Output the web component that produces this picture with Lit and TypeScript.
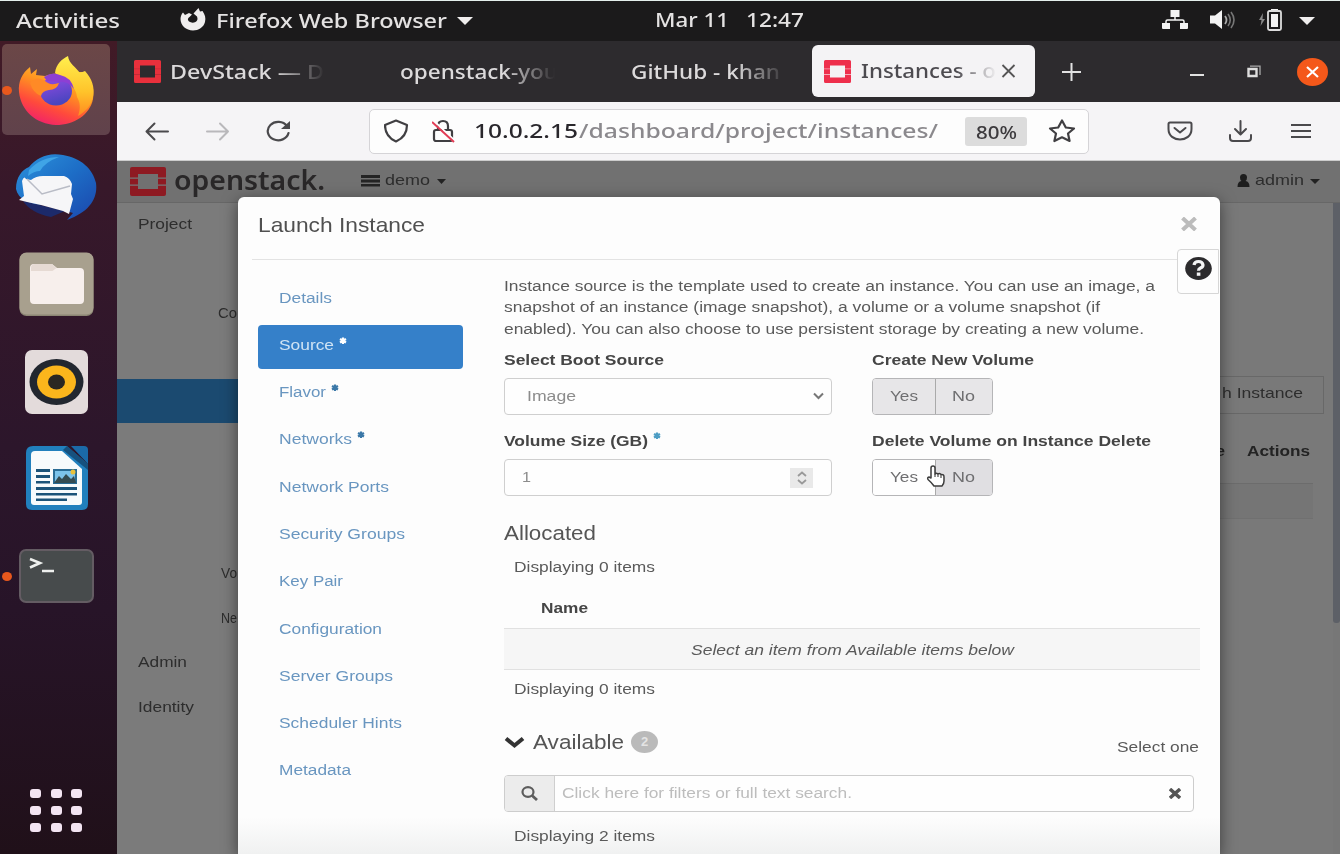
import { LitElement, html, css, nothing } from "lit";
import { customElement, property } from "lit/decorators.js";
import { classMap } from "lit/directives/class-map.js";

/** One line of text set to a fixed advance width. */
@customElement("fit-text")
class FitText extends LitElement {
  @property() text = "";
  @property({ type: Number }) w = 0;

  static styles = css`
    :host { display: inline-block; flex: none; white-space: pre; text-align: left; }
    span { display: inline-block; transform-origin: 0 50%; }
  `;

  updated() {
    const span = this.renderRoot.querySelector("span") as HTMLElement;
    span.style.transform = "none";
    const natural = span.getBoundingClientRect().width;
    this.style.width = `${this.w}px`;
    if (natural) span.style.transform = `scaleX(${this.w / natural})`;
  }

  render() {
    return html`<span>${this.text}</span>`;
  }
}

const t = (text: string, w: number) => html`<fit-text .text=${text} .w=${w}></fit-text>`;

const openstackMark = (bg: string, fg: string) => html`
  <svg class="mark" viewBox="0 0 36 29" preserveAspectRatio="none">
    <path fill="${fg}" fill-rule="evenodd" d="M2 0h32a2 2 0 0 1 2 2v25a2 2 0 0 1-2 2H2a2 2 0 0 1-2-2V2a2 2 0 0 1 2-2zM8 7v15h20V7z"/>
    <path fill="${bg}" d="M0 10.600h8v1.200H0zM28 10.600h8v1.200h-8zM0 17.600h8v1.200H0zM28 17.600h8v1.200h-8z"/>
  </svg>`;

@customElement("top-bar")
class TopBar extends LitElement {
  static styles = css`
    :host { display: grid; grid-template-columns: 16px 164px 36px 240px 199px 91px 416px 48px 49px 38px 1fr;
      align-items: center; height: 41px; box-sizing: border-box; border-top: 1px solid #e4efec; background: #1b1a1b; color: #e4e2e2;
      font: 500 19.500px/34px "Noto Sans", sans-serif; }
    svg { display: block; }
    .up { padding-bottom: 2px; }
  `;
  render() {
    return html`
      <i></i>
      <div>${t("Activities", 104)}</div>
      <svg class="up" width="26" height="24" viewBox="0 0 26 24"><path fill="#f0eeee" d="M.5 11C.5 8.500 1.500 6 3 4.500l2 2.500 4-2 3 1.500-2.500 2.500Q6.500 11 9 13.500q3 2 6.500.5 3-2 1.500-5.500L13.500 5.500 18.500 0l1.500 3.500 2.500-.5C25 6.500 26 10 25 14c-1.500 5.500-6.500 8.500-12 8.500C6 22.500.5 17.500.5 11z"/></svg>
      <div>${t("Firefox Web Browser", 231)}</div>
      <svg width="18" height="10" viewBox="0 0 18 10"><path fill="#f0eeee" d="M1 1h16L9 9z"/></svg>
      <div class="up">${t("Mar 11", 74)}</div>
      <div class="up">${t("12:47", 58)}</div>
      <svg class="up" width="26" height="22" viewBox="0 0 26 22"><path fill="#f3f3f3" d="M8.500 1h9v7h-9zM0 14h8v6H1q-1 0-1-1zM18 14h8v5q0 1-1 1h-7z"/><path fill="none" stroke="#f3f3f3" stroke-width="1.500" d="M13 8v3M4 14v-1.500q0-1.500 1.500-1.500h15q1.500 0 1.500 1.500V14"/></svg>
      <svg class="up" width="26" height="22" viewBox="0 0 26 22"><path fill="#f3f3f3" d="M0 6.500h5L12 1v19l-7-5.500H0z"/><path fill="none" stroke="#aaa" stroke-width="1.800" d="M15 7q3 4 0 8"/><path fill="none" stroke="#777" stroke-width="1.600" d="M18 5q4.500 6 0 12M21 3q6 8 0 16"/></svg>
      <svg class="up" width="26" height="24" viewBox="0 0 26 24"><path fill="#888" d="M4 5 0 12h2.500l-1 6L6 11H3.500z"/><path fill="#f3f3f3" d="M12 1h7v3h-7z"/><rect x="9" y="3" width="13" height="19" rx="1.500" fill="none" stroke="#ddd" stroke-width="1.800"/><path fill="#f3f3f3" d="M12 6h7v13h-7z"/></svg>
      <svg width="18" height="10" viewBox="0 0 18 10"><path fill="#f0eeee" d="M2 1h16l-8 8z"/></svg>
    `;
  }
}

const firefoxIcon = html`<svg width="78" height="70" viewBox="0 0 78 70">
  <defs>
    <linearGradient id="fa" x1=".8" y1="0" x2=".3" y2="1"><stop offset="0" stop-color="#ffd23a"/><stop offset=".4" stop-color="#ff9420"/><stop offset=".72" stop-color="#ff4a3c"/><stop offset="1" stop-color="#f0206c"/></linearGradient>
    <linearGradient id="fb" x1="0" y1="0" x2=".3" y2="1"><stop offset="0" stop-color="#9a4be6"/><stop offset="1" stop-color="#4a45c0"/></linearGradient>
    <linearGradient id="fc" x1="0" y1="0" x2="0" y2="1"><stop offset="0" stop-color="#fff04e"/><stop offset=".6" stop-color="#ffc32a"/><stop offset="1" stop-color="#ff8a20"/></linearGradient>
  </defs>
  <path fill="url(#fa)" d="M2 37C1 27 5 18 13 12l1 7 6-5-1 6 9 1 7-2 20-2 12 0c7 7 11 16 9 27-3 16-19 26-37 26C19 69 4 56 2 37z"/>
  <path fill="url(#fc)" d="M38 18C39 9 45 4 51 1c1 8 8 11 12 17l5-2c7 8 10 16 8 26-2 9-8 15-15 19 3-8 2-14-1-19-1-12-12-16-22-24z"/>
  <ellipse cx="39" cy="36" rx="16" ry="14.500" fill="url(#fb)"/>
  <path fill="#8d3fd3" d="M27 22q8-6 16-2 11 2 14 14-7-9-15-7l-12-1z"/>
  <path fill="#ff8a26" d="M13 28q7-8 15-2 5 5 14 2-2 7-10 7-7 1-8 6-8-3-11-13z"/>
</svg>`;

const thunderbirdIcon = html`<svg width="82" height="68" viewBox="0 0 82 68">
  <defs><linearGradient id="ta" x1="0" y1="0" x2="1" y2="1"><stop offset="0" stop-color="#2c93dc"/><stop offset=".5" stop-color="#1d6dc6"/><stop offset="1" stop-color="#1b46ac"/></linearGradient></defs>
  <path fill="#1c2a6a" d="M8 48q8 12 28 16l14-6z"/>
  <path fill="url(#ta)" d="M1 36C1 24 7 17 14 14 22 4 34-1 48 2c18 3 30 14 33 28 2 15-6 29-29 37l6-7-26-8C14 52 3 46 1 36z"/>
  <path fill="#3fa4e6" d="M14 17Q26 4 44 4 30 9 25 18q-6 0-12 5z"/>
  <path fill="#f6f6f8" d="M7 28q2-6 4-2l5 1q5-4 12-4h21q6 2 8 8l-1 10 2 5-4 15-6-3-22-6-14-3-8-2 5-4z"/>
  <path fill="none" stroke="#b9bcc6" stroke-width="1.500" d="m12 26 15 15 28-8"/>
</svg>`;

const filesIcon = html`<svg width="75" height="64" viewBox="0 0 75 64">
  <rect x=".5" y="1" width="74" height="63" rx="7" fill="#8c8674"/><rect x=".5" y=".5" width="74" height="62" rx="7" fill="#a8a08e"/>
  <path fill="#f7efec" d="M11 16q0-4 4-4h18l5 4h23q4 0 4 4v28q0 4-4 4H15q-4 0-4-4z"/><path fill="#e6dad3" d="M12 16q0-4 4-4h17l4.500 4-4 3H12z"/>
</svg>`;

const rhythmIcon = html`<svg width="63" height="64" viewBox="0 0 63 64">
  <rect width="63" height="64" rx="7" fill="#e3dbdb"/><ellipse cx="31.500" cy="32" rx="27" ry="23" fill="#22272f"/>
  <ellipse cx="31.500" cy="32" rx="19.500" ry="16.500" fill="#fbb61c"/><ellipse cx="31.500" cy="32" rx="8.500" ry="7.500" fill="#2a2722"/>
</svg>`;

const writerIcon = html`<svg width="63" height="65" viewBox="0 0 63 65">
  <path fill="#2180bd" d="M8 0h34l21 18v40q0 6-6 6H7q-6 0-6-6V7q0-7 7-7z"/>
  <path fill="#1b6aa8" d="M46 0h13q4 0 4 4v14z"/><path fill="#11385c" d="m42 0 21 18v6L38 4z" opacity=".65"/>
  <path fill="#f7fbfc" d="M10 5h27l20 18v33q0 3-3 3H9q-3 0-3-3V9q0-4 4-4z"/>
  <path fill="#1c5479" d="M11 23h14v3H11zM11 29h14v3H11zM11 35h14v2.500H11zM11 41h41v3H11zM11 47h41v2.500H11zM11 52.500h31V55H11z"/>
  <path fill="#2a6c94" d="M28 23h24v15H28z"/><path fill="#7cc3ea" d="M30 25h20v11H30z"/><path fill="#344c52" d="m29 37 5-7 3 3 4-5 5 5 3-3 2 7z"/><circle cx="48" cy="26" r="2.500" fill="#e9c13a"/>
</svg>`;

const terminalIcon = html`<svg width="75" height="54" viewBox="0 0 75 54">
  <rect x="1" y="1" width="73" height="52" rx="6" fill="#474b4c" stroke="#645c63" stroke-width="2"/>
  <path fill="none" stroke="#eef0ee" stroke-width="2.600" d="m11 10 10 4-10 4.500M23 22h12"/>
</svg>`;

@customElement("app-dock")
class AppDock extends LitElement {
  static styles = css`
    :host { display: flex; flex-direction: column; width: 117px; background: linear-gradient(#411a26 0, #37182a 18%, #2c162b 50%, #271428 70%, #201019 100%); }
    .slot { position: relative; display: grid; place-items: center; height: 97.300px; width: 112px; flex: none; }
    .on { position: absolute; left: 2px; top: 45px; width: 10px; height: 9px; border-radius: 50%; background: #e9581d; }
    .tile { display: grid; place-items: center; width: 108px; height: 91px; border-radius: 5px; background: linear-gradient(#6b4747, #60424b); }
    .apps { margin: auto 0 22px 30px; display: grid; grid-template-columns: repeat(3, 11px); gap: 7.500px 9.500px; }
    .apps i { height: 9.500px; border-radius: 3px; background: #f3e4f2; }
    svg { display: block; }
  `;
  render() {
    return html`
      <div class="slot"><div class="tile">${firefoxIcon}</div><i class="on"></i></div>
      ${[thunderbirdIcon, filesIcon, rhythmIcon, writerIcon].map((i) => html`<div class="slot">${i}</div>`)}
      <div class="slot">${terminalIcon}<i class="on"></i></div>
      <div class="apps">${Array.from({ length: 9 }, () => html`<i></i>`)}</div>
    `;
  }
}

@customElement("browser-chrome")
class BrowserChrome extends LitElement {
  static styles = css`
    :host { display: block; font: 500 20px/30px "Noto Sans", sans-serif; }
    svg { display: block; }
    .tabs { display: grid; grid-template-columns: 17px 36px 230px 231px 181px 223px 27px 128px 57px 50px 1fr; height: 61px; align-items: center; background: #2d2b2e; color: #dcdadb; }
    .tabs .mark { width: 27px; height: 23px; }
    .label { white-space: nowrap; height: 32px; width: 160px; padding-top: 2px; -webkit-mask-image: linear-gradient(90deg, #000 65%, transparent 97%); }
    .active { display: grid; grid-template-columns: 12px 37px 140px 1fr; align-items: center; height: 52px; border-radius: 6px; background: #f4f3f5; color: #4d4b50; margin-bottom: 1px; }
    .active .label { width: 136px; -webkit-mask-image: linear-gradient(90deg, #000 70%, transparent 100%); }
    .close { display: grid; place-items: center; width: 31px; height: 28px; border-radius: 50%; background: #f4581a; }
    .bar { display: grid; grid-template-columns: 28px 60px 61px 103px 720px 78px 62px 62px 1fr; align-items: center; height: 59px; box-sizing: border-box; border-bottom: 1px solid #ccc; background: #f5f4f6; }
    .url { display: grid; grid-template-columns: 14px 48px 42px 105px 386px 63px 20px 1fr; align-items: center; height: 45px; box-sizing: border-box; border: 1.500px solid #d5d4d7; border-radius: 5px; background: #fdfdfd; }
    .host { color: #29272c; }
    .path { color: #8b898d; }
    .zoom { display: grid; place-items: center; height: 29px; border-radius: 3px; background: #dcdcdc; color: #3c3a3d; font-size: 17.500px; margin-right: 1px; }
  `;
  render() {
    return html`
      <div class="tabs">
        <i></i>${openstackMark("#c22b36", "#e8303c")}
        <div class="label">${t("DevStack — D", 154)}</div>
        <div class="label">${t("openstack-you", 158)}</div>
        <div class="label">${t("GitHub - khan", 149)}</div>
        <div class="active"><i></i>${openstackMark("#f7a9b6", "#ee2f4c")}
          <div class="label">${t("Instances - o", 135)}</div>
          <svg width="16" height="14" viewBox="0 0 16 14"><path stroke="#555" stroke-width="1.800" d="m1.500 1 12 12m0-12-12 12"/></svg>
        </div>
        <i></i>
        <svg width="20" height="20" viewBox="0 0 20 20"><path stroke="#e2e2e2" stroke-width="2" d="M9.500 1v18M0 10h19"/></svg>
        <svg width="14" height="12" viewBox="0 0 14 12"><path stroke="#e2e2e2" stroke-width="2" d="M0 9h14"/></svg>
        <svg width="16" height="14" viewBox="0 0 16 14"><path fill="none" stroke="#dedede" stroke-width="2.400" d="M1.500 4h8v7h-8z"/><path fill="none" stroke="#aaa" stroke-width="1.300" d="M3 1.200h10V10"/></svg>
        <div class="close"><svg width="13" height="12" viewBox="0 0 13 12"><path stroke="#fff" stroke-width="2.200" d="m1 1 11 10m0-10L1 11"/></svg></div>
      </div>
      <div class="bar">
        <i></i>
        <svg width="26" height="20" viewBox="0 0 26 20"><path fill="none" stroke="#4a494c" stroke-width="2" stroke-linecap="round" stroke-linejoin="round" d="M23 10.500H1.500m8-8-8 8 8 8"/></svg>
        <svg width="26" height="20" viewBox="0 0 26 20"><path fill="none" stroke="#b9b8bb" stroke-width="2" stroke-linecap="round" stroke-linejoin="round" d="M2 10.500h21m-8-8 8 8-8 8"/></svg>
        <svg width="26" height="22" viewBox="0 0 26 22"><path fill="none" stroke="#4a494c" stroke-width="2.200" stroke-linecap="round" d="M21 6A10.500 9.200 0 1 0 22.500 13"/><path fill="#4a494c" d="M24 1v8h-9z"/></svg>
        <div class="url">
          <i></i>
          <svg width="26" height="24" viewBox="0 0 26 24"><path fill="none" stroke="#403f42" stroke-width="2.200" stroke-linejoin="round" d="m12 1.500 11 4.500c0 8-3 13-11 16.500C4 19 1 14 1 6z"/></svg>
          <svg width="24" height="24" viewBox="0 0 24 24"><path fill="none" stroke="#403f42" stroke-width="2.200" d="M6 11V7q0-5 5-5t5 5v4"/><rect x="2" y="11" width="18" height="11" rx="2" fill="none" stroke="#403f42" stroke-width="2.200"/><path stroke="#fff" stroke-width="2" d="m2 2 20 19"/><path stroke="#e23c55" stroke-width="2" d="m0 3 22 20"/></svg>
          <div class="host">${t("10.0.2.15", 104)}</div>
          <div class="path">${t("/dashboard/project/instances/", 359)}</div>
          <div class="zoom">${t("80%", 41)}</div>
          <i></i>
          <svg width="28" height="24" viewBox="0 0 28 24"><path fill="none" stroke="#403f42" stroke-width="2.200" stroke-linejoin="round" d="m14 1.500 3.800 7 8.200 1-6 5 1.600 7.500L14 18.300 6.400 22 8 14.500l-6-5 8.200-1z"/></svg>
        </div>
        <i></i>
        <svg width="26" height="20" viewBox="0 0 26 20"><path fill="none" stroke="#4a494c" stroke-width="2" stroke-linecap="round" stroke-linejoin="round" d="M3 1.500h20q1.500 0 1.500 1.500v5c0 14-23 14-23 0V3q0-1.500 1.500-1.500zM7.500 7l5.500 4.500L18.500 7"/></svg>
        <svg width="24" height="22" viewBox="0 0 24 22"><path fill="none" stroke="#4a494c" stroke-width="2" stroke-linecap="round" stroke-linejoin="round" d="M11.500 1v13M6 9l5.500 5.500L17 9M1 15v3q0 3 3 3h15q3 0 3-3v-3"/></svg>
        <svg width="22" height="16" viewBox="0 0 22 16"><path stroke="#4a494c" stroke-width="1.800" d="M0 2h20M0 8h20M0 14h20"/></svg>
      </div>
    `;
  }
}

@customElement("dashboard-page")
class DashboardPage extends LitElement {
  static styles = css`
    :host { display: grid; grid-template-rows: 42px 1fr; height: 100%; background: #7a7a7a; color: #2d2d2d; font: 15px/20px "Liberation Sans", Arial, sans-serif; overflow: hidden; }
    svg { display: block; }
    nav { display: grid; grid-template-columns: 13px 44px 187px 24px 52px 800px 18px 55px 1fr; align-items: center; background: #717171; border-bottom: 1px solid #676767; }
    nav .mark { width: 36px; height: 29px; }
    nav > div { padding-bottom: 3px; }
    .word { font: 600 27.500px/34px "Noto Sans", sans-serif; color: #292728; }
    .main { display: grid; grid-template-columns: 122px 974px 1fr 7px; }
    .side { display: flex; flex-direction: column; background: #7b7b7b; overflow: hidden; }
    .row { height: 44.500px; padding: 11px 0 0 21px; box-sizing: border-box; flex: none; }
    .sub { text-align: right; padding-right: 2px; padding-left: 0; }
    .gap { height: 44px; flex: none; }
    .blue { height: 44px; margin: 43px 0 129px; background: #1b4a70; flex: none; }
    .right { grid-column: 3; display: flex; flex-direction: column; background: #797979; }
    .btnrow { height: 38px; margin: 173px 9px 0 0; border: 1px solid #686868; border-left: 0; box-sizing: border-box; padding: 6px 0 0 9px; }
    .head { display: flex; height: 70px; box-sizing: border-box; padding: 27px 0 0 3px; gap: 22px; font-weight: bold; color: #232323; border-bottom: 1px solid #6c6c6c; margin-right: 20px; }
    .cell { height: 34px; margin-right: 20px; border-bottom: 1px solid #707070; background: #757575; }
    .scroll { background: #777; }
    .scroll i { display: block; height: 420px; background: #5d6067; border-radius: 0 0 3px 3px; }
  `;
  render() {
    return html`
      <nav>
        <i></i>${openstackMark("#777", "#8e1a22")}
        <div class="word">${t("openstack.", 151)}</div>
        <svg width="19" height="14" viewBox="0 0 19 14"><path fill="#242424" d="M0 0h19v3H0zM0 4.500h19v3H0zM0 9h19v2.500H0z"/></svg>
        <div>${t("demo", 45)}</div>
        <svg width="9" height="6" viewBox="0 0 9 6"><path fill="#222" d="M0 0h9L4.500 5z"/></svg>
        <svg width="13" height="15" viewBox="0 0 13 15"><path fill="#1d1d1d" d="M6.500 0q3.500 0 3.500 3.500Q10 6 8.500 7q4 .5 4 6H.5q0-5.500 4-6Q3 6 3 3.500 3 0 6.500 0z"/></svg>
        <div>${t("admin", 49)}</div>
        <svg width="10" height="6" viewBox="0 0 10 6"><path fill="#222" d="M0 0h10L5 5z"/></svg>
      </nav>
      <div class="main">
        <div class="side">
          <div class="row">${t("Project", 54)}</div>
          <div class="gap"></div>
          <div class="row sub">${t("Co", 19)}</div>
          <div class="blue"></div>
          <div class="row sub">${t("Vo", 16)}</div>
          <div class="row sub">${t("Ne", 16)}</div>
          <div class="row">${t("Admin", 49)}</div>
          <div class="row">${t("Identity", 56)}</div>
        </div>
        <div class="right">
          <div class="btnrow">${t("h Instance", 81)}</div>
          <div class="head">${t("e", 9)}${t("Actions", 63)}</div>
          <div class="cell"></div>
        </div>
        <div class="scroll"><i></i></div>
      </div>
    `;
  }
}

interface Step { label: string; w: number; required?: boolean; active?: boolean; }

const STEPS: Step[] = [
  { label: "Details", w: 53 },
  { label: "Source", w: 55, required: true, active: true },
  { label: "Flavor", w: 47, required: true },
  { label: "Networks", w: 73, required: true },
  { label: "Network Ports", w: 110 },
  { label: "Security Groups", w: 126 },
  { label: "Key Pair", w: 64 },
  { label: "Configuration", w: 103 },
  { label: "Server Groups", w: 114 },
  { label: "Scheduler Hints", w: 123 },
  { label: "Metadata", w: 72 },
];

const asterisk = html`<svg class="req" width="8" height="8" viewBox="0 0 8 8"><path stroke="currentColor" stroke-width="2.200" d="M4 .5v6.500M1 2l6 3.500M7 2 1 5.500"/></svg>`;

@customElement("launch-dialog")
class LaunchDialog extends LitElement {
  static styles = css`
    :host { display: block; box-sizing: border-box; width: 982px; height: 657px; overflow: hidden; border-radius: 6px 6px 0 0; background: linear-gradient(#fdfdfd 620px, #f0f1f1 657px); color: #5a5a5a; font: 15.400px/21.400px "Liberation Sans", Arial, sans-serif; }
    svg { display: block; }
    header { display: flex; justify-content: space-between; align-items: center; height: 63px; box-sizing: border-box; margin: 0 40px 0 14px; padding: 0 0 6px 6px; border-bottom: 1px solid #e3e3e3; }
    .title { font-size: 21px; line-height: 26px; color: #505050; }
    .x { margin: 0 -17px 2px 0; }
    .help { position: absolute; left: 939px; top: 52px; width: 42px; height: 45px; box-sizing: border-box; display: grid; place-items: center; padding-bottom: 6px; border: 1px solid #d6d6d6; border-radius: 4px 0 0 4px; background: #fdfdfd; }
    .body { display: grid; grid-template-columns: 205px 1fr; column-gap: 41px; padding-left: 20px; }
    .steps { display: flex; flex-direction: column; gap: 3.300px; padding-top: 18px; }
    .step { display: flex; gap: 5px; height: 44px; box-sizing: border-box; padding: 8.500px 0 0 21px; border-radius: 4px; color: #6996c0; }
    .step .req { color: #3b78a8; margin-top: 3px; }
    .step.on { background: #3580c9; color: #cfe3f4; }
    .step.on .req { color: #fff; }
    .intro { display: flex; flex-direction: column; padding-top: 15px; }
    .form { display: grid; grid-template-columns: 328px 1fr; column-gap: 40px; row-gap: 5px; }
    .label { display: flex; gap: 5px; height: 39px; box-sizing: border-box; padding-top: 10px; font-weight: bold; color: #454545; }
    .label .req { color: #4d9dc4; margin-top: 2px; }
    .group { height: 76px; }
    .field { display: flex; align-items: center; justify-content: space-between; height: 37px; box-sizing: border-box; border: 1.500px solid #cfcfcf; border-radius: 4px; background: #fefefe; color: #8c8c8c; padding: 0 7px 2px 22px; }
    .num { padding: 0 18px 2px 17px; }
    .spin { display: grid; place-items: center; width: 23px; height: 20px; background: #e9e9e9; margin-top: 2px; }
    .toggle { display: grid; grid-template-columns: 62px 59px; width: 121px; height: 37px; box-sizing: border-box; border: 1.500px solid #b5b5b7; border-radius: 4px; overflow: hidden; color: #6e6e70; }
    .toggle > div { display: grid; place-items: center; padding-bottom: 3px; background: #e7e6e8; }
    .toggle > div.off { background: #fefefe; }
    .toggle > div + div { border-left: 1px solid #aaa; padding-right: 3px; }
    .toggle .pressed { background: #e0dfe2; }
    h4 { margin: 0; font-weight: normal; font-size: 20.500px; line-height: 26px; color: #555; }
    .alloc { padding-top: 24px; height: 48px; box-sizing: border-box; }
    .line { padding-left: 10px; height: 43px; box-sizing: border-box; padding-top: 12px; }
    .th { font-weight: bold; color: #454545; padding: 10px 0 0 37px; height: 41px; box-sizing: border-box; }
    .empty { display: grid; place-items: center; width: 696px; height: 42px; box-sizing: border-box; border: solid #e1e1e1; border-width: 1.500px 0; background: #f6f6f6; font-style: italic; }
    .after { padding-top: 8px; height: 49px; }
    .avail { display: flex; align-items: center; width: 695px; height: 46px; box-sizing: border-box; }
    .avail h4 { margin: 0 7px 0 8px; }
    .badge { width: 27px; height: 22px; border-radius: 50%; background: #bababa; color: #e4e4e4; font: bold 13px/22px "Liberation Sans", sans-serif; text-align: center; }
    .one { margin: 9px 0 0 auto; }
    .search { display: grid; grid-template-columns: 50px 1fr 24px; align-items: center; width: 690px; height: 37px; margin-top: 10px; box-sizing: border-box; border: 1.500px solid #cdcdcd; border-radius: 4px; background: #fefefe; color: #bdbdbd; overflow: hidden; }
    .search .mag { display: grid; place-items: center; align-self: stretch; background: #ececec; border-right: 1px solid #cfcfcf; }
    .search .ph { padding: 0 0 2px 7px; }
    .last { padding-top: 13px; }
    .cursor { position: absolute; left: 688px; top: 268px; }
  `;

  private toggle(firstOff: boolean) {
    return html`<div class="toggle">
      <div class=${classMap({ off: firstOff })}>${t("Yes", 28)}</div>
      <div class=${classMap({ pressed: firstOff })}>${t("No", 23)}</div>
    </div>`;
  }

  render() {
    return html`
      <header>
        <div class="title">${t("Launch Instance", 167)}</div>
        <svg class="x" width="16" height="14" viewBox="0 0 16 14"><path stroke="#bcbcbc" stroke-width="4" d="m1.500 1 13 12m0-12-13 12"/></svg>
      </header>
      <div class="help">
        <svg width="27" height="23" viewBox="0 0 27 23"><ellipse cx="13.500" cy="11.500" rx="13.300" ry="11.400" fill="#2c2b2d"/><path fill="none" stroke="#f4f4f4" stroke-width="3.200" d="M9 8q.5-3.500 4.500-3.500T18 8q0 2-2.500 3-2 1-2 2.700"/><path fill="#f4f4f4" d="M11.800 15.500h3.600v3.300h-3.600z"/></svg>
      </div>
      <div class="body">
        <div class="steps">
          ${STEPS.map((s) => html`<div class=${classMap({ step: true, on: !!s.active })}>${t(s.label, s.w)}${s.required ? asterisk : nothing}</div>`)}
        </div>
        <div>
          <div class="intro">
            ${t("Instance source is the template used to create an instance. You can use an image, a", 651)}
            ${t("snapshot of an instance (image snapshot), a volume or a volume snapshot (if", 596)}
            ${t("enabled). You can also choose to use persistent storage by creating a new volume.", 640)}
          </div>
          <div class="form">
            <div class="group">
              <div class="label">${t("Select Boot Source", 160)}</div>
              <div class="field">${t("Image", 49)}<svg width="11" height="8" viewBox="0 0 11 8"><path fill="none" stroke="#777" stroke-width="2" d="m1 1.500 4.500 4.500L10 1.500"/></svg></div>
            </div>
            <div class="group"><div class="label">${t("Create New Volume", 162)}</div>${this.toggle(false)}</div>
            <div class="group">
              <div class="label">${t("Volume Size (GB)", 144)}${asterisk}</div>
              <div class="field num">${t("1", 9)}<div class="spin"><svg width="12" height="14" viewBox="0 0 12 14"><path fill="none" stroke="#999" stroke-width="1.800" d="m2 5 4-3.500L10 5M2 9l4 3.500L10 9"/></svg></div></div>
            </div>
            <div class="group"><div class="label">${t("Delete Volume on Instance Delete", 279)}</div>${this.toggle(true)}</div>
          </div>
          <h4 class="alloc">${t("Allocated", 92)}</h4>
          <div class="line">${t("Displaying 0 items", 141)}</div>
          <div class="th">${t("Name", 47)}</div>
          <div class="empty">${t("Select an item from Available items below", 323)}</div>
          <div class="line after">${t("Displaying 0 items", 141)}</div>
          <div class="avail">
            <svg width="21" height="13" viewBox="0 0 21 13"><path fill="none" stroke="#333" stroke-width="4" d="m2 2.500 8.500 7 8.500-7"/></svg>
            <h4>${t("Available", 91)}</h4><div class="badge">2</div>
            <div class="one">${t("Select one", 82)}</div>
          </div>
          <div class="search">
            <div class="mag"><svg width="17" height="15" viewBox="0 0 17 15"><ellipse cx="7" cy="6" rx="5.500" ry="4.800" fill="none" stroke="#5d5d5d" stroke-width="2.200"/><path stroke="#5d5d5d" stroke-width="2.800" d="m11 9.500 5 4.500"/></svg></div>
            <div class="ph">${t("Click here for filters or full text search.", 290)}</div>
            <svg width="12" height="11" viewBox="0 0 12 11"><path stroke="#555" stroke-width="3.400" d="m1 1 10 9m0-9L1 10"/></svg>
          </div>
          <div class="line last">${t("Displaying 2 items", 141)}</div>
        </div>
      </div>
      <svg class="cursor" width="20" height="23" viewBox="0 0 20 23"><path fill="#fff" stroke="#3d3d3d" stroke-width="1.500" stroke-linejoin="round" d="M5 13V3q0-2 2-2t2 2v6q1-1.500 3 0 1.500-1 3 .5 3-.5 3 2.500v4q0 3-2 5H8q-2-3-6-6.500-1-2 1-2.500z"/><path stroke="#3d3d3d" stroke-width="1.100" d="M9 9v3M12 9v3M15 10v3"/></svg>
    `;
  }
}

@customElement("app-root")
class AppRoot extends LitElement {
  static styles = css`
    :host { display: flex; flex-direction: column; width: 1340px; height: 854px; overflow: hidden; background: #777; }
    .desktop { display: grid; grid-template-columns: 117px 1fr; height: 813px; }
    .window { display: grid; grid-template-rows: 120px 1fr; min-width: 0; min-height: 0; }
    .page { position: relative; min-height: 0; overflow: hidden; }
    .modal { position: absolute; left: 121px; top: 36px; box-shadow: 0 4px 16px rgba(0, 0, 0, 0.5); }
  `;
  render() {
    return html`
      <top-bar></top-bar>
      <div class="desktop">
        <app-dock></app-dock>
        <div class="window">
          <browser-chrome></browser-chrome>
          <div class="page">
            <dashboard-page></dashboard-page>
            <launch-dialog class="modal"></launch-dialog>
          </div>
        </div>
      </div>
    `;
  }
}
